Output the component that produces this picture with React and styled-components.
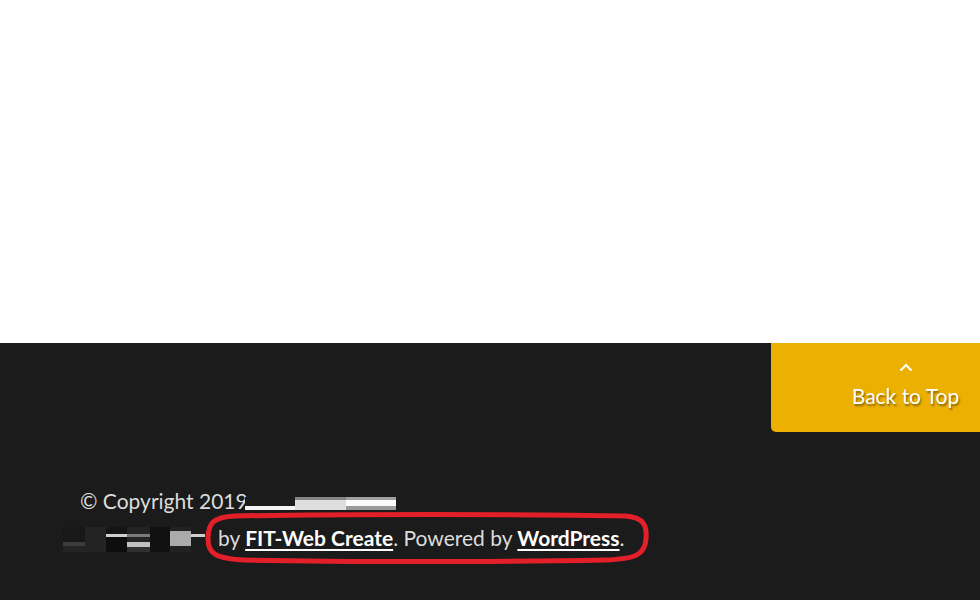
import React from "react";
import styled, { createGlobalStyle } from "styled-components";

const Global = createGlobalStyle`
  html, body { margin: 0; padding: 0; background: #fff; }
  body { font-family: Lato, "Open Sans", sans-serif; }
`;

const Page = styled.div`
  width: 980px;
  height: 600px;
  display: flex;
  flex-direction: column;
  overflow: hidden;
`;

const Content = styled.main`
  height: 343px;
  background: #ffffff;
  flex: none;
`;

const Footer = styled.footer`
  flex: 1;
  background: #1b1b1b;
  display: flex;
  flex-direction: column;
`;

const TopRow = styled.div`
  display: flex;
  justify-content: flex-end;
`;

const BackToTop = styled.a`
  width: 209px;
  height: 89px;
  background: #ebb000;
  border-bottom-left-radius: 5px;
  display: flex;
  flex-direction: column;
  align-items: center;
  box-sizing: border-box;
  padding: 20px 0 0 60px;
  color: #fff;
  text-decoration: none;
  font-family: Lato, sans-serif;
  font-size: 21px;
  line-height: 26px;
  text-shadow: 1px 2px 2px rgba(0, 0, 0, 0.45);
  cursor: pointer;
`;

const Chevron = styled.svg`
  width: 14px;
  height: 9px;
  margin-bottom: 11px;
`;

const Credits = styled.div`
  margin-top: 50px;
  color: #dcdcdc;
  font-family: Lato, sans-serif;
  font-size: 21px;
  line-height: 37px;
`;

const Line = styled.div`
  display: flex;
  align-items: center;
  padding-left: ${(p) => p.$indent}px;
  height: 37px;
`;

const Mosaic = styled.div`
  display: flex;
  flex-shrink: 0;
  margin-left: ${(p) => p.$gap || 0}px;
  margin-top: ${(p) => p.$offset || 0}px;
`;

const Tile = styled.div`
  width: ${(p) => p.$w}px;
  flex-shrink: 0;
  display: flex;
  flex-direction: column;
`;

const Band = styled.div`
  height: ${(p) => p.$h}px;
  background: ${(p) => p.$c};
`;

const Annotated = styled.span`
  position: relative;
  margin-left: 13px;
  white-space: nowrap;
`;

const Ring = styled.svg`
  position: absolute;
  left: -13px;
  top: -6px;
  width: 444px;
  height: 50px;
  pointer-events: none;
  overflow: visible;
`;

const Link = styled.a`
  color: #ffffff;
  font-weight: 700;
  text-decoration: underline;
  text-underline-offset: 3px;
  text-decoration-thickness: 2px;
`;

const line1 = [
  { w: 50, bands: [["#1c1c1c", 9], ["#f4f4f4", 4]] },
  { w: 51, bands: [["#858585", 3], ["#dedede", 10]] },
  { w: 50, bands: [["#a0a0a0", 3], ["#fafafa", 6], ["#9a9a9a", 4]] },
];

const line2 = [
  { w: 22, bands: [["#181818", 15], ["#3c3c3c", 4], ["#242424", 6]] },
  { w: 21, bands: [["#232323", 25]] },
  { w: 21, bands: [["#151515", 7], ["#d0d0d0", 3], ["#0e0e0e", 15]] },
  { w: 23, bands: [["#232323", 7], ["#7a7a7a", 3], ["#242424", 5], ["#c0c0c0", 5], ["#303030", 5]] },
  { w: 20, bands: [["#111111", 25]] },
  { w: 21, bands: [["#222222", 4], ["#ababab", 15], ["#222222", 6]] },
  { w: 14, bands: [["#1b1b1b", 7], ["#cfcfcf", 3], ["#1b1b1b", 15]] },
];

function Pixelated({ tiles, offset, gap }) {
  return (
    <Mosaic $offset={offset} $gap={gap}>
      {tiles.map((t, i) => (
        <Tile key={i} $w={t.w}>
          {t.bands.map(([c, h], j) => (
            <Band key={j} $c={c} $h={h} />
          ))}
        </Tile>
      ))}
    </Mosaic>
  );
}

export default function App() {
  return (
    <Page>
      <Global />
      <Content />
      <Footer>
        <TopRow>
          <BackToTop>
            <Chevron viewBox="0 0 14 9">
              <path d="M1.5 7.5 L7 2 L12.5 7.5" fill="none" stroke="#fff" strokeWidth="2" />
            </Chevron>
            Back to Top
          </BackToTop>
        </TopRow>
        <Credits>
          <Line $indent={80}>
            © Copyright 2019
            <Pixelated tiles={line1} offset={6} gap={-3} />
          </Line>
          <Line $indent={63}>
            <Pixelated tiles={line2} offset={4} />
            <Annotated>
              by <Link>FIT-Web Create</Link>. Powered by <Link>WordPress</Link>.
              <Ring viewBox="0 0 444 50">
                <path
                  d="M30 3 C120 1 330 1 420 3 C440 4 442 14 441 26 C440 42 430 46 400 47 C300 49 130 49 40 47 C10 46 3 40 3 26 C3 10 8 4 30 3 Z"
                  fill="none"
                  stroke="#e3202a"
                  strokeWidth="5"
                />
              </Ring>
            </Annotated>
          </Line>
        </Credits>
      </Footer>
    </Page>
  );
}
